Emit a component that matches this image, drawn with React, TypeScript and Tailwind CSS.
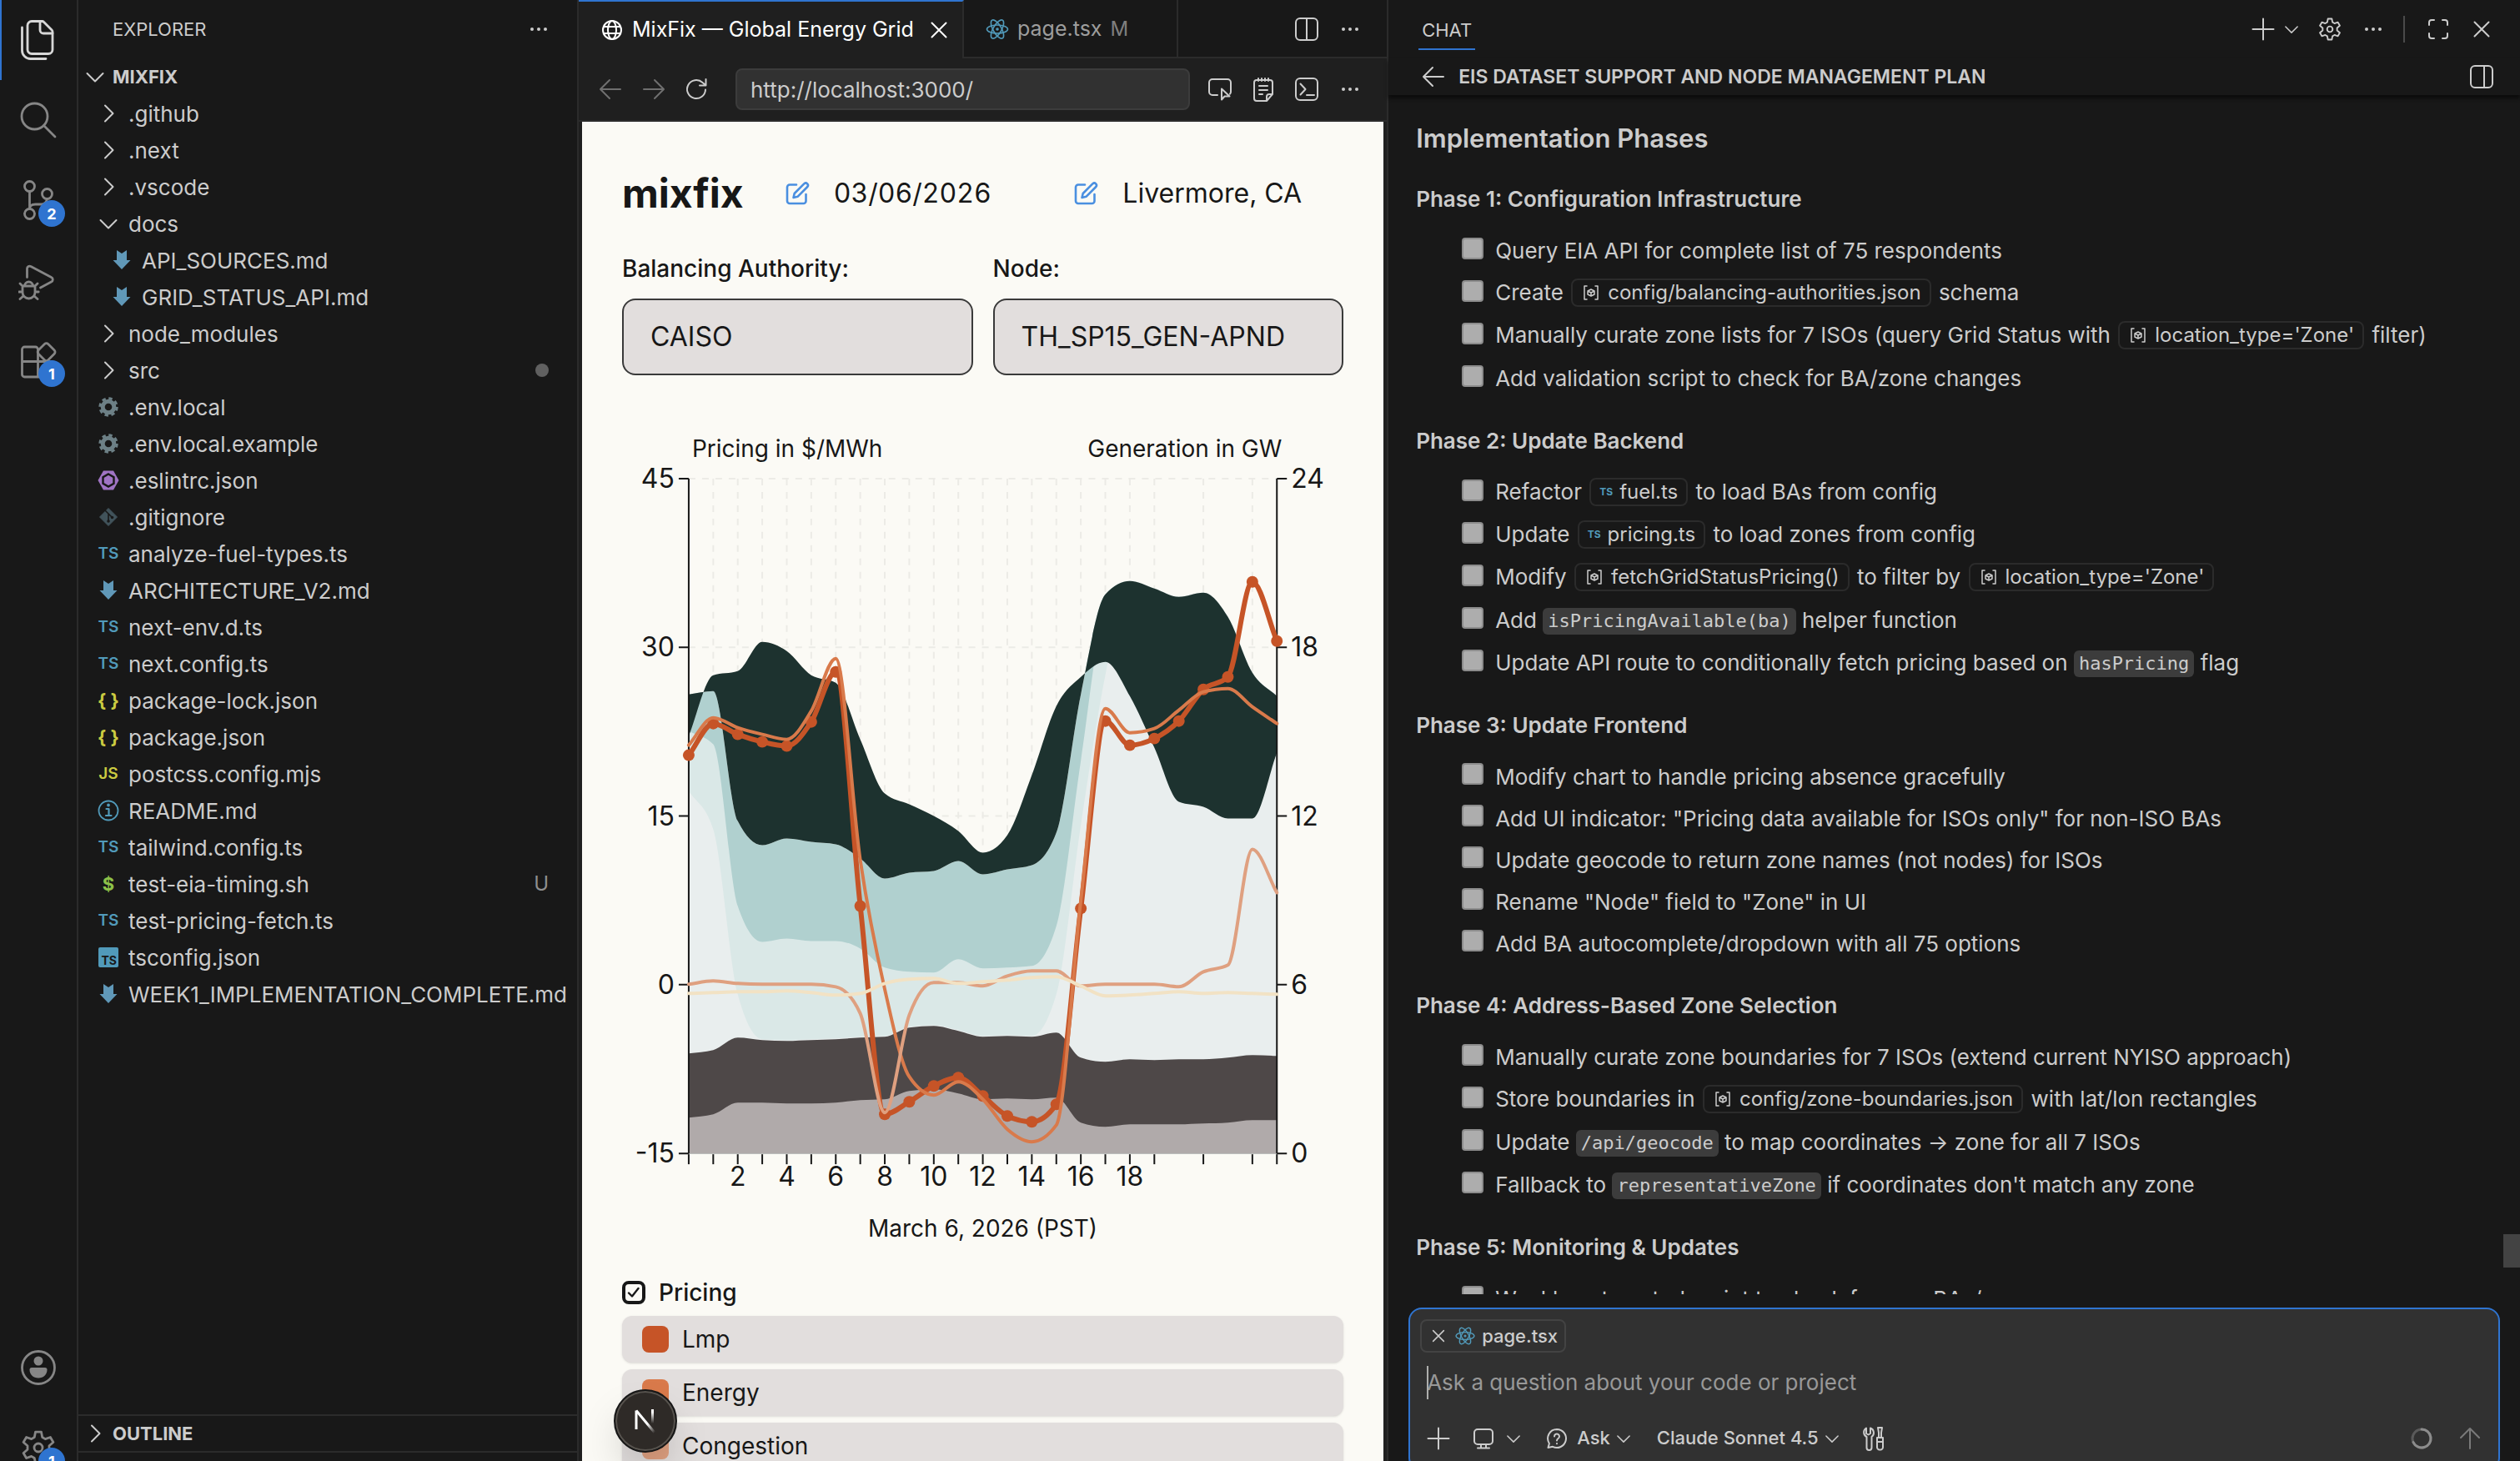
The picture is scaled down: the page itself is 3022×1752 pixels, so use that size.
import type { ReactNode } from "react";
import clsx from "clsx";

interface IconProps {
  className?: string;
  children: ReactNode;
  box?: number;
  stroke?: number;
}

function Icon({ className, children, box = 32, stroke = 2 }: IconProps) {
  return (
    <svg
      viewBox={`0 0 ${box} ${box}`}
      fill="none"
      stroke="currentColor"
      strokeWidth={stroke}
      strokeLinecap="round"
      strokeLinejoin="round"
      className={clsx("shrink-0", className ?? "size-8")}
      aria-hidden="true"
    >
      {children}
    </svg>
  );
}

const ChevronRight = () => (
  <Icon>
    <path d="M12 6.500l9.500 9.500-9.500 9.500" />
  </Icon>
);

const ChevronDown = ({ className }: { className?: string }) => (
  <Icon className={className}>
    <path d="M6.500 12l9.500 9.500 9.500-9.500" />
  </Icon>
);

const Dots = () => (
  <Icon>
    <g fill="currentColor" stroke="none">
      <circle cx="8" cy="16" r="2" />
      <circle cx="16" cy="16" r="2" />
      <circle cx="24" cy="16" r="2" />
    </g>
  </Icon>
);

const CloseIcon = ({ className }: { className?: string }) => (
  <Icon className={className}>
    <path d="M7.500 7.500l17 17M24.500 7.500l-17 17" />
  </Icon>
);

const PlusIcon = () => (
  <Icon>
    <path d="M16 3.500v25M3.500 16h25" />
  </Icon>
);

const SplitIcon = ({ at = 16 }: { at?: number }) => (
  <Icon>
    <rect x="3" y="3" width="26" height="26" rx="5" />
    <path d={`M${at} 3v26`} />
  </Icon>
);

const GEAR_PATH =
  "M20.500 3.200h7l1.200 6.300 3.600 2.100 6.100-2.100 3.500 6-4.900 4.200v4.600l4.900 4.200-3.500 6-6.100-2.100-3.600 2.100-1.200 6.300h-7l-1.200-6.300-3.600-2.100-6.100 2.100-3.500-6 4.900-4.200v-4.600l-4.900-4.200 3.500-6 6.100 2.100 3.600-2.100z";

const GearIcon = ({ className, stroke = 2.8 }: { className?: string; stroke?: number }) => (
  <Icon box={48} stroke={stroke} className={className}>
    <g transform="translate(0 2)">
      <path d={GEAR_PATH} />
      <circle cx="24" cy="22" r="5" />
    </g>
  </Icon>
);

const ReactIcon = ({ className }: { className?: string }) => (
  <Icon className={clsx("text-[#519aba]", className ?? "size-8")} stroke={1.6}>
    <ellipse cx="16" cy="16" rx="12.500" ry="5" />
    <ellipse cx="16" cy="16" rx="12.500" ry="5" transform="rotate(60 16 16)" />
    <ellipse cx="16" cy="16" rx="12.500" ry="5" transform="rotate(120 16 16)" />
    <circle cx="16" cy="16" r="1" />
  </Icon>
);

const EditIcon = () => (
  <Icon className="size-8 text-[#4a8fe0]" stroke={2.6}>
    <path d="M15 5.500H7a3 3 0 0 0-3 3V25a3 3 0 0 0 3 3h16.500a3 3 0 0 0 3-3v-8" />
    <path d="M24.500 4.200a2.700 2.700 0 0 1 3.800 3.800L16.500 19.800l-5 1.200 1.200-5z" />
  </Icon>
);

/* ---------- Activity bar ---------- */

const activityItems: { id: string; label: string; badge?: number; icon: ReactNode }[] = [
  {
    id: "files",
    label: "Explorer",
    icon: (
      <>
        <path d="M16 1.500h12.500a3 3 0 0 1 2.100.9l9.500 9.500a3 3 0 0 1 .9 2.100v21.500a5 5 0 0 1-5 5H16a5 5 0 0 1-5-5v-29a5 5 0 0 1 5-5z" />
        <path d="M26 1.500v10.500a4 4 0 0 0 4 4h11" />
        <path d="M4.500 9v27.500a10 10 0 0 0 10 10H33" />
      </>
    ),
  },
  {
    id: "search",
    label: "Search",
    icon: (
      <>
        <circle cx="19.500" cy="19.500" r="15.500" />
        <path d="M30.500 30.500L44 44" />
      </>
    ),
  },
  {
    id: "scm",
    label: "Source Control",
    badge: 2,
    icon: (
      <>
        <circle cx="13.500" cy="7.500" r="6" />
        <circle cx="34.500" cy="16.500" r="6" />
        <circle cx="13.500" cy="40.500" r="6" />
        <path d="M13.500 13.500v21M34.500 22.500c-1 4.500-3 6.500-7 6.500h-7c-4.500 0-7 1.500-7 5.500" />
      </>
    ),
  },
  {
    id: "debug",
    label: "Run and Debug",
    icon: (
      <>
        <path d="M10.500 20.500V10a3 3 0 0 1 4.500-2.500l24.500 13a3 3 0 0 1 0 5.500L26.500 33" />
        <path d="M5 31h15v7.500a7.500 7.500 0 0 1-15 0zM7.500 31a5 5 0 0 1 10 0M5 31l-3-3M20 31l3-3M5 38H.800M20 38h4.200M6 43l-4 3.500M19 43l4 3.500" />
      </>
    ),
  },
  {
    id: "extensions",
    label: "Extensions",
    badge: 1,
    icon: (
      <>
        <path d="M23.500 25.500H4.500V11a3 3 0 0 1 3-3h13a3 3 0 0 1 3 3zM4.500 25.500V41a3 3 0 0 0 3 3h32.500a3 3 0 0 0 3-3V28.500a3 3 0 0 0-3-3H23.500V44" />
        <path d="M31.500 4.500a3 3 0 0 1 4.200 0l7.500 7.500a3 3 0 0 1 0 4.200l-7.500 7.500a3 3 0 0 1-4.200 0L24 16.200a3 3 0 0 1 0-4.200z" />
      </>
    ),
  },
];

function Badge({ value }: { value: number }) {
  return (
    <span className="absolute top-12 left-[46px] flex size-8 items-center justify-center rounded-full bg-[#2f74d0] text-[18px] font-bold text-white">
      {value}
    </span>
  );
}

function ActivityBar() {
  return (
    <nav className="flex w-[94px] shrink-0 flex-col border-r-2 border-[#2b2b2b] bg-[#181818] text-[#868686]">
      {activityItems.map((item, i) => (
        <button
          key={item.id}
          aria-label={item.label}
          className={clsx(
            "relative flex h-24 w-full items-center justify-center",
            i === 0 && "border-l-2 border-[#2f74d0] pr-0.5 text-[#d7d7d7]",
          )}
        >
          <Icon box={48} stroke={2.8} className="size-12">
            {item.icon}
          </Icon>
          {item.badge && <Badge value={item.badge} />}
        </button>
      ))}
      <div className="mt-auto -mb-8">
        <button aria-label="Accounts" className="flex h-24 w-full items-center justify-center">
          <Icon box={48} stroke={2.8} className="size-12">
            <circle cx="24" cy="24" r="19.500" />
            <circle cx="24" cy="16" r="5.500" fill="currentColor" stroke="none" />
            <path
              d="M16 24h16a2.500 2.500 0 0 1 2.500 2.500c0 6-4.500 10-10.500 10s-10.500-4-10.500-10A2.500 2.500 0 0 1 16 24z"
              fill="currentColor"
              stroke="none"
            />
          </Icon>
        </button>
        <button aria-label="Manage" className="relative flex h-24 w-full items-center justify-center">
          <GearIcon className="size-12" />
          <Badge value={1} />
        </button>
      </div>
    </nav>
  );
}

/* ---------- Explorer ---------- */

type FileKind =
  | "folder"
  | "open"
  | "md"
  | "gear"
  | "eslint"
  | "git"
  | "ts"
  | "json"
  | "js"
  | "info"
  | "sh"
  | "tsconfig";

const tree: { name: string; kind: FileKind; child?: boolean; status?: string }[] = [
  { name: ".github", kind: "folder" },
  { name: ".next", kind: "folder" },
  { name: ".vscode", kind: "folder" },
  { name: "docs", kind: "open" },
  { name: "API_SOURCES.md", kind: "md", child: true },
  { name: "GRID_STATUS_API.md", kind: "md", child: true },
  { name: "node_modules", kind: "folder" },
  { name: "src", kind: "folder", status: "dot" },
  { name: ".env.local", kind: "gear" },
  { name: ".env.local.example", kind: "gear" },
  { name: ".eslintrc.json", kind: "eslint" },
  { name: ".gitignore", kind: "git" },
  { name: "analyze-fuel-types.ts", kind: "ts" },
  { name: "ARCHITECTURE_V2.md", kind: "md" },
  { name: "next-env.d.ts", kind: "ts" },
  { name: "next.config.ts", kind: "ts" },
  { name: "package-lock.json", kind: "json" },
  { name: "package.json", kind: "json" },
  { name: "postcss.config.mjs", kind: "js" },
  { name: "README.md", kind: "info" },
  { name: "tailwind.config.ts", kind: "ts" },
  { name: "test-eia-timing.sh", kind: "sh", status: "U" },
  { name: "test-pricing-fetch.ts", kind: "ts" },
  { name: "tsconfig.json", kind: "tsconfig" },
  { name: "WEEK1_IMPLEMENTATION_COMPLETE.md", kind: "md" },
];

function FileIcon({ kind }: { kind: FileKind }) {
  switch (kind) {
    case "folder":
      return <ChevronRight />;
    case "open":
      return <ChevronDown />;
    case "md":
      return (
        <svg viewBox="0 0 32 32" className="size-8 shrink-0 fill-[#6098b8]" aria-hidden="true">
          <path d="M10 4l6 4 6-4v12h4.500L16 27 5.500 16H10z" />
        </svg>
      );
    case "gear":
      return (
        <svg viewBox="0 0 32 32" className="size-8 shrink-0 text-[#6d8086]" aria-hidden="true">
          <circle cx="16" cy="16" r="6.800" fill="none" stroke="currentColor" strokeWidth="5" />
          <circle cx="16" cy="16" r="10.200" fill="none" stroke="currentColor" strokeWidth="3" strokeDasharray="4.400 3.610" />
        </svg>
      );
    case "eslint":
      return (
        <svg viewBox="0 0 32 32" className="size-8 shrink-0" aria-hidden="true">
          <path d="M10 4.500h12L28.500 16 22 27.500H10L3.500 16z" fill="#a074c4" />
          <path d="M16 8.500l6.500 3.800v7.400L16 23.500l-6.500-3.800v-7.400z" fill="#a074c4" stroke="#181818" strokeWidth="2.400" />
        </svg>
      );
    case "git":
      return (
        <svg viewBox="0 0 32 32" className="size-8 shrink-0" aria-hidden="true">
          <path d="M16 5.500L26.500 16 16 26.500 5.500 16z" fill="#41535b" stroke="#41535b" strokeLinejoin="round" />
          <path d="M12 8l4 4v10M16 12l5 5" fill="none" stroke="#181818" strokeWidth="1.600" />
          <circle cx="16" cy="21" r="1.800" fill="#181818" />
          <circle cx="20.500" cy="16.500" r="1.800" fill="#181818" />
        </svg>
      );
    case "ts":
      return <span className="w-8 shrink-0 text-center text-[19px] font-semibold text-[#519aba]">TS</span>;
    case "js":
      return <span className="w-8 shrink-0 text-center text-[19px] font-semibold text-[#cbcb41]">JS</span>;
    case "json":
      return <span className="w-8 shrink-0 text-center text-[22px] leading-8 font-bold text-[#cbcb41]">{"{ }"}</span>;
    case "sh":
      return <span className="w-8 shrink-0 text-center text-[22px] font-bold text-[#8dc149]">$</span>;
    case "info":
      return (
        <Icon className="size-8 text-[#519aba]" stroke={1.8}>
          <circle cx="16" cy="16" r="11.500" />
          <path d="M13.500 14h3v8M13 22h6.500" strokeWidth="2.200" />
          <circle cx="16" cy="9.500" r="1" fill="currentColor" />
        </Icon>
      );
    case "tsconfig":
      return (
        <span className="flex w-8 shrink-0 justify-center">
          <span className="flex size-6 items-end justify-end rounded-xs bg-[#519aba] pr-0.5 text-[14px] leading-4 font-bold text-[#181818]">
            TS
          </span>
        </span>
      );
  }
}

function Sidebar() {
  return (
    <aside className="flex w-[600px] shrink-0 flex-col border-r-2 border-[#2b2b2b] bg-[#181818] text-[#cccccc]">
      <header className="flex h-[70px] shrink-0 items-center justify-between pr-[30px] pl-[41px]">
        <h2 className="text-[22px]">EXPLORER</h2>
        <button aria-label="Views and more actions">
          <Dots />
        </button>
      </header>
      <button className="flex h-11 shrink-0 items-center gap-[5px] pl-1 text-[22px] font-bold">
        <ChevronDown />
        MIXFIX
      </button>
      <ul className="flex-1 overflow-hidden text-[26px]">
        {tree.map((f) => (
          <li key={f.name}>
            <button
              className={clsx(
                "flex h-11 w-full items-center gap-2 pr-[34px] whitespace-nowrap",
                f.child ? "pl-9" : "pl-5",
              )}
            >
              <FileIcon kind={f.kind} />
              {f.name}
              {f.status === "dot" && <span className="ml-auto size-4 rounded-full bg-[#606060]" />}
              {f.status === "U" && <span className="ml-auto text-[24px] text-[#8f8f8f]">U</span>}
            </button>
          </li>
        ))}
      </ul>
      <button className="flex h-11 shrink-0 items-center gap-[5px] border-t-2 border-[#2b2b2b] pl-1 text-[22px] font-bold">
        <ChevronRight />
        OUTLINE
      </button>
      <div className="h-3 shrink-0 border-t-2 border-[#2b2b2b]" />
    </aside>
  );
}

/* ---------- Chart ---------- */

const PLOT = { left: 80, right: 786, top: 74, bottom: 884 };
const HOURS = 24;

// Hourly samples, in chart units measured from the top of the drawing.
const series = {
  gas: [383, 310, 305, 270, 281, 310, 319, 387, 452, 465, 479, 497, 523, 502, 430, 347, 312, 294, 335, 397, 462, 468, 482, 482, 403],
  imports: [333, 329, 485, 514, 506, 510, 513, 530, 554, 547, 545, 533, 549, 543, 538, 499, 333, 213, 197, 206, 216, 211, 240, 307, 335],
  hydro: [377, 393, 587, 630, 626, 629, 629, 638, 661, 666, 667, 651, 662, 661, 659, 611, 413, 228, 197, 206, 216, 211, 240, 307, 335],
  solar: [449, 495, 693, 747, 748, 747, 746, 744, 743, 732, 730, 736, 743, 742, 743, 693, 490, 310, 197, 206, 216, 211, 240, 307, 335],
  nuclear: [764, 760, 745, 748, 749, 748, 747, 745, 744, 733, 731, 737, 744, 743, 744, 739, 769, 774, 771, 772, 771, 771, 769, 766, 767],
  wind: [841, 837, 823, 823, 824, 824, 823, 820, 819, 809, 807, 812, 819, 818, 819, 817, 847, 852, 849, 849, 849, 848, 847, 844, 844],
};

const lmp = [406, 368, 381, 390, 395, 366, 306, 587, 837, 822, 803, 793, 815, 839, 846, 825, 590, 365, 394, 386, 365, 327, 312, 198, 269];
const energy = [394, 361, 373, 381, 387, 353, 290, 532, 687, 792, 814, 798, 819, 855, 870, 850, 580, 350, 379, 374, 352, 330, 326, 348, 368];
const congestion = [681, 677, 680, 681, 681, 681, 684, 716, 835, 718, 679, 679, 683, 671, 665, 665, 683, 681, 681, 681, 684, 666, 658, 519, 571];
const loss = [692, 691, 690, 690, 689, 691, 694, 692, 680, 675, 674, 680, 678, 676, 673, 672, 683, 695, 694, 692, 690, 692, 691, 692, 693];

const xAt = (hour: number) => PLOT.left + ((PLOT.right - PLOT.left) * hour) / HOURS;

// Monotone cubic segments through the samples, so peaks never overshoot.
function segments(ys: number[], reverse = false) {
  const n = ys.length;
  const d = ys.slice(1).map((y, i) => y - ys[i]);
  const m = ys.map((_, i) => {
    if (i === 0) return d[0];
    if (i === n - 1) return d[n - 2];
    const a = d[i - 1];
    const b = d[i];
    if (a * b <= 0) return 0;
    return Math.sign(a) * Math.min(Math.abs(a), Math.abs(b), Math.abs(a + b) / 4) * 2;
  });
  const out: string[] = [];
  for (let i = 0; i < n - 1; i++) {
    const x0 = xAt(i);
    const x1 = xAt(i + 1);
    const t = (x1 - x0) / 3;
    const c0 = `${x0 + t} ${ys[i] + m[i] / 3}`;
    const c1 = `${x1 - t} ${ys[i + 1] - m[i + 1] / 3}`;
    out.push(reverse ? `C${c1} ${c0} ${x0} ${ys[i]}` : `C${c0} ${c1} ${x1} ${ys[i + 1]}`);
  }
  return (reverse ? out.reverse() : out).join("");
}

const linePath = (ys: number[]) => `M${xAt(0)} ${ys[0]}${segments(ys)}`;

const areaPath = (top: number[], base?: number[]) => {
  if (!base) return `${linePath(top)}L${PLOT.right} ${PLOT.bottom}L${PLOT.left} ${PLOT.bottom}Z`;
  return `${linePath(top)}L${PLOT.right} ${base[base.length - 1]}${segments(base, true)}Z`;
};

const hourTicks = [...Array.from({ length: 20 }, (_, i) => i), 21, 23, 24];
const yTicks = [
  { price: "45", gw: "24" },
  { price: "30", gw: "18" },
  { price: "15", gw: "12" },
  { price: "0", gw: "6" },
  { price: "-15", gw: "0" },
];

function EnergyChart() {
  const yAt = (i: number) => PLOT.top + ((PLOT.bottom - PLOT.top) * i) / 4;
  return (
    <svg viewBox="0 0 866 1000" className="block w-full text-[#171717]" role="img" aria-label="Pricing and generation by hour">
      <g fill="currentColor" fontSize="28">
        <text x="84" y="48">Pricing in $/MWh</text>
        <text x="792" y="48" textAnchor="end">Generation in GW</text>
        <text x="433" y="984" textAnchor="middle">March 6, 2026 (PST)</text>
      </g>

      <g stroke="#ecebe6" strokeWidth="2" strokeDasharray="8 8">
        {yTicks.slice(0, 4).map((t, i) => (
          <path key={t.price} d={`M${PLOT.left} ${yAt(i)}H${PLOT.right}`} />
        ))}
        {hourTicks.slice(1, -1).map((h) => (
          <path key={h} d={`M${xAt(h)} ${PLOT.top}V${PLOT.bottom}`} />
        ))}
      </g>

      <path d={areaPath(series.imports)} fill="#b0d0cf" />
      <path d={areaPath(series.hydro)} fill="#dae8e7" />
      <path d={areaPath(series.solar)} fill="#e9eeee" />
      <path d={areaPath(series.gas, series.imports)} fill="#1d322f" />
      <path d={areaPath(series.nuclear)} fill="#4e4848" />
      <path d={areaPath(series.wind)} fill="#b0aaaa" />

      <g stroke="currentColor" strokeWidth="2">
        <path d={`M${PLOT.left} ${PLOT.top}V${PLOT.bottom}M${PLOT.right} ${PLOT.top}V${PLOT.bottom}`} />
        {yTicks.map((t, i) => (
          <path key={t.gw} d={`M${PLOT.left - 12} ${yAt(i)}h12M${PLOT.right} ${yAt(i)}h12`} />
        ))}
        {hourTicks.map((h) => (
          <path key={h} d={`M${xAt(h)} ${PLOT.bottom + 1}v12`} />
        ))}
      </g>

      <g fill="none" strokeLinecap="round">
        <path d={linePath(lmp)} stroke="#c65427" strokeWidth="6" />
        {lmp.map((y, h) => (
          <circle key={h} cx={xAt(h)} cy={y} r="7" fill="#c65427" />
        ))}
        <path d={linePath(energy)} stroke="#d97a4b" strokeWidth="4" />
        <path d={linePath(congestion)} stroke="#dfa080" strokeWidth="4" />
        <path d={linePath(loss)} stroke="#f2e2c4" strokeWidth="4" />
      </g>

      <g fill="currentColor" fontSize="32">
        {yTicks.map((t, i) => (
          <g key={t.gw}>
            <text x="63" y={yAt(i) + 11} textAnchor="end">
              {t.price}
            </text>
            <text x="803" y={yAt(i) + 11}>
              {t.gw}
            </text>
          </g>
        ))}
        {[2, 4, 6, 8, 10, 12, 14, 16, 18].map((h) => (
          <text key={h} x={xAt(h)} y="923" textAnchor="middle">
            {h}
          </text>
        ))}
      </g>
    </svg>
  );
}

/* ---------- Editor ---------- */

function PickField({ id, label, value }: { id: string; label: string; value: string }) {
  return (
    <div className="flex-1">
      <label htmlFor={id} className="block text-[28px] leading-9 font-medium">
        {label}
      </label>
      <select
        id={id}
        defaultValue={value}
        className="mt-[18px] block h-23 w-full appearance-none rounded-2xl border-2 border-[#3a3a3a] bg-[#e2dedd] px-8 text-[32px]"
      >
        <option>{value}</option>
      </select>
    </div>
  );
}

const pricingRows = [
  { label: "Lmp", swatch: "bg-[#c65427]" },
  { label: "Energy", swatch: "bg-[#d97a4b]" },
  { label: "Congestion", swatch: "bg-[#dfa080]" },
];

function Preview() {
  return (
    <div className="relative mx-1 min-h-0 flex-1 overflow-hidden bg-[#fbfaf5] px-12 text-[#171717]">
      <div className="flex h-[172px] items-center">
        <h1 className="text-[48px] font-bold">mixfix</h1>
        <button className="ml-12 flex items-center gap-7 text-[32px] tabular-nums">
          <EditIcon />
          03/06/2026
        </button>
        <button className="ml-auto flex items-center gap-7 pr-[50px] text-[32px]">
          <EditIcon />
          Livermore, CA
        </button>
      </div>
      <div className="-mt-3.5 flex gap-6">
        <PickField id="ba" label="Balancing Authority:" value="CAISO" />
        <PickField id="node" label="Node:" value="TH_SP15_GEN-APND" />
      </div>
      <div className="pt-[50px]">
        <EnergyChart />
      </div>
      <label className="mt-[33px] flex h-9 items-center gap-4 text-[28px] font-medium">
        <span className="grid size-7 place-items-center">
          <input
            type="checkbox"
            defaultChecked
            className="col-start-1 row-start-1 size-7 appearance-none rounded-lg border-4 border-[#171717]"
          />
          <Icon className="col-start-1 row-start-1 size-4" box={16} stroke={2.4}>
            <path d="M2 8.500l4 4L13.500 3" />
          </Icon>
        </span>
        Pricing
      </label>
      <ul className="mt-2.5 space-y-2">
        {pricingRows.map((r) => (
          <li key={r.label} className="flex h-14 items-center gap-4 rounded-xl bg-[#e2dedd] px-6 text-[28px] shadow-sm">
            <span className={clsx("size-8 rounded-lg", r.swatch)} />
            {r.label}
          </li>
        ))}
      </ul>
      <button
        aria-label="Open Next.js Dev Tools"
        className="absolute bottom-2.5 left-[38px] flex size-[76px] items-center justify-center rounded-full border-2 border-[#171717] bg-[#2e2a27] shadow-2xl ring-2 ring-[#57534e] ring-inset"
      >
        <svg viewBox="0 0 28 30" className="h-[30px] w-7" fill="none" strokeWidth="3" aria-hidden="true">
          <defs>
            <linearGradient id="nDiag" x1="0" y1="0" x2="1" y2="1">
              <stop offset="0.6" stopColor="#fff" />
              <stop offset="1" stopColor="#fff" stopOpacity="0" />
            </linearGradient>
            <linearGradient id="nStem" x1="0" y1="0" x2="0" y2="1">
              <stop offset="0.2" stopColor="#fff" />
              <stop offset="1" stopColor="#fff" stopOpacity="0" />
            </linearGradient>
          </defs>
          <path d="M3 25V2.500" stroke="#fff" />
          <path d="M3 2.500L25 29" stroke="url(#nDiag)" />
          <rect x="21" y="1" width="3" height="17" fill="url(#nStem)" />
        </svg>
      </button>
    </div>
  );
}

function Editor() {
  return (
    <main className="flex min-w-0 flex-[970] flex-col bg-[#1f1f1f] text-[#cccccc]">
      <div className="flex h-[70px] shrink-0 text-[25px] whitespace-nowrap">
        <div className="flex w-[462px] items-center border-t-2 border-r-2 border-t-[#2f74d0] border-r-[#2b2b2b] pl-6 text-white">
          <Icon stroke={2}>
            <circle cx="16" cy="16" r="11" />
            <ellipse cx="16" cy="16" rx="5" ry="11" />
            <path d="M6 12h20M6 20h20" />
          </Icon>
          <span className="ml-2">MixFix — Global Energy Grid</span>
          <button aria-label="Close tab" className="ml-3.5">
            <CloseIcon />
          </button>
        </div>
        <div className="flex flex-1 border-b-2 border-[#2b2b2b] bg-[#181818]">
          <div className="flex w-[257px] items-center border-r-2 border-[#2b2b2b] pt-0.5 pl-6 text-[#9d9d9d]">
            <ReactIcon />
            <span className="ml-2">page.tsx</span>
            <span className="ml-2.5 text-[24px] text-[#7f7f7f]">M</span>
          </div>
          <div className="ml-auto flex items-center gap-5 pt-0.5 pr-7">
            <button aria-label="Split editor">
              <SplitIcon />
            </button>
            <button aria-label="More actions">
              <Dots />
            </button>
          </div>
        </div>
      </div>

      <div className="flex h-[76px] shrink-0 items-center gap-5 border-b-2 border-[#2b2b2b] pr-7 pl-[22px]">
        <button aria-label="Back" className="text-[#6f6f6f]">
          <Icon>
            <path d="M28 16H4.500M15 5L4 16l11 11" />
          </Icon>
        </button>
        <button aria-label="Forward" className="text-[#6f6f6f]">
          <Icon>
            <path d="M4 16h23.500M17 5l11 11-11 11" />
          </Icon>
        </button>
        <button aria-label="Reload">
          <Icon>
            <path d="M26 16.500A11 11 0 1 1 22.500 8L26 11M26.500 4v7.500H19" />
          </Icon>
        </button>
        <input
          aria-label="Address"
          defaultValue="http://localhost:3000/"
          className="ml-2.5 h-[50px] min-w-0 flex-1 rounded-lg border-2 border-[#3c3c3c] bg-[#313131] px-4 text-[26px]"
        />
        <button aria-label="Select element">
          <Icon>
            <path d="M13 23H7a4 4 0 0 1-4-4V8a4 4 0 0 1 4-4h18a4 4 0 0 1 4 4v11a4 4 0 0 1-1 2.700M18 15.500v13l3.500-4h6z" />
          </Icon>
        </button>
        <button aria-label="Console logs">
          <Icon>
            <path d="M5 8a3 3 0 0 1 3-3h16a3 3 0 0 1 3 3v14l-7 8H8a3 3 0 0 1-3-3zM27 22h-4a3 3 0 0 0-3 3v4.500M10 3v3M14 3v3M18 3v3M22 3v3M11 12h10M11 17h10M11 22h4" />
          </Icon>
        </button>
        <button aria-label="Toggle developer tools">
          <Icon>
            <rect x="3" y="3" width="26" height="26" rx="5" />
            <path d="M8.500 9.500L14.500 16l-6 6.500M16 23h9" />
          </Icon>
        </button>
        <button aria-label="More actions">
          <Dots />
        </button>
      </div>

      <Preview />
    </main>
  );
}

/* ---------- Chat ---------- */

function Symbol({ children }: { children: ReactNode }) {
  return (
    <a href="#symbol" className="mx-0.5 mb-1 inline-flex h-[34px] items-center gap-2 rounded-lg border-2 border-[#2b2b2b] px-2.5 align-middle text-[24px]">
      <Icon className="size-6" box={24} stroke={1.5}>
        <path d="M7 4H4v16h3M17 4h3v16h-3M12 8l4 2v4l-4 2-4-2v-4zM8 10l4 2 4-2M12 12v4" />
      </Icon>
      {children}
    </a>
  );
}

function TsFile({ children }: { children: ReactNode }) {
  return (
    <a href="#file" className="mx-0.5 mb-1 inline-flex h-[34px] items-center gap-2 rounded-lg border-2 border-[#2b2b2b] px-2.5 align-middle text-[24px]">
      <span className="text-[12px] font-bold text-[#519aba]">TS</span>
      {children}
    </a>
  );
}

function Code({ children }: { children: ReactNode }) {
  return (
    <code className="mb-0.5 inline-flex h-8 items-center rounded-md bg-[#3c3c3c] px-1.5 align-middle font-['DejaVu_Sans_Mono',monospace] text-[22px]">
      {children}
    </code>
  );
}

const phases: { title: string; plain?: boolean; items: ReactNode[] }[] = [
  {
    title: "Phase 1: Configuration Infrastructure",
    items: [
      "Query EIA API for complete list of 75 respondents",
      <>Create <Symbol>config/balancing-authorities.json</Symbol> schema</>,
      <>Manually curate zone lists for 7 ISOs (query Grid Status with <Symbol>location_type='Zone'</Symbol> filter)</>,
      "Add validation script to check for BA/zone changes",
    ],
  },
  {
    title: "Phase 2: Update Backend",
    items: [
      <>Refactor <TsFile>fuel.ts</TsFile> to load BAs from config</>,
      <>Update <TsFile>pricing.ts</TsFile> to load zones from config</>,
      <>Modify <Symbol>fetchGridStatusPricing()</Symbol> to filter by <Symbol>location_type='Zone'</Symbol></>,
      <>Add <Code>isPricingAvailable(ba)</Code> helper function</>,
      <>Update API route to conditionally fetch pricing based on <Code>hasPricing</Code> flag</>,
    ],
  },
  {
    title: "Phase 3: Update Frontend",
    plain: true,
    items: [
      "Modify chart to handle pricing absence gracefully",
      'Add UI indicator: "Pricing data available for ISOs only" for non-ISO BAs',
      "Update geocode to return zone names (not nodes) for ISOs",
      'Rename "Node" field to "Zone" in UI',
      "Add BA autocomplete/dropdown with all 75 options",
    ],
  },
  {
    title: "Phase 4: Address-Based Zone Selection",
    items: [
      "Manually curate zone boundaries for 7 ISOs (extend current NYISO approach)",
      <>Store boundaries in <Symbol>config/zone-boundaries.json</Symbol> with lat/lon rectangles</>,
      <>Update <Code>/api/geocode</Code> to map coordinates → zone for all 7 ISOs</>,
      <>Fallback to <Code>representativeZone</Code> if coordinates don't match any zone</>,
    ],
  },
  {
    title: "Phase 5: Monitoring & Updates",
    items: ["Weekly automated script to check for new BAs/zones"],
  },
];

function ChatPanel() {
  return (
    <section className="flex min-w-0 flex-[1358] flex-col border-l-2 border-[#2b2b2b] bg-[#181818] text-[#cccccc]">
      <header className="flex h-[70px] shrink-0 items-center pr-[30px] pl-9">
        <h2 className="mt-2.5 border-b-2 border-[#2f74d0] px-1 pb-1.5 text-[22px] leading-8">CHAT</h2>
        <div className="ml-auto flex items-center gap-5">
          <button aria-label="New chat" className="-mr-0.5 flex items-center">
            <PlusIcon />
            <ChevronDown className="ml-1.5 size-6" />
          </button>
          <button aria-label="Configure chat">
            <GearIcon className="size-8" />
          </button>
          <button aria-label="More actions">
            <Dots />
          </button>
          <span className="mr-1 h-8 w-0.5 bg-[#4a4a4a]" />
          <button aria-label="Maximize">
            <Icon>
              <path d="M11 5H8a3 3 0 0 0-3 3v3M21 5h3a3 3 0 0 1 3 3v3M11 27H8a3 3 0 0 1-3-3v-3M21 27h3a3 3 0 0 0 3-3v-3" />
            </Icon>
          </button>
          <button aria-label="Close chat">
            <CloseIcon />
          </button>
        </div>
      </header>
      <div className="z-10 flex h-11 shrink-0 items-center justify-between pr-[30px] pl-[38px] shadow-[0_4px_4px_#0c0c0c]">
        <button className="flex items-center gap-3.5 text-[23px] font-semibold">
          <Icon>
            <path d="M28 16H4.500M15 5L4 16l11 11" />
          </Icon>
          EIS DATASET SUPPORT AND NODE MANAGEMENT PLAN
        </button>
        <button aria-label="Toggle sessions">
          <SplitIcon at={19} />
        </button>
      </div>

      <div className="relative min-h-0 flex-1 overflow-hidden pt-8 pl-[33px] text-[26px] whitespace-nowrap">
        <h3 className="mb-2 text-[31px] leading-10 font-semibold">Implementation Phases</h3>
        {phases.map((p) => (
          <div key={p.title} className="mb-[5px]">
            <h4 className="flex h-[73px] items-end pb-2 text-[26px] leading-10 font-semibold">{p.title}</h4>
            <ul className="pt-2 pl-[55px]">
              {p.items.map((item, i) => (
                <li key={i} className={p.plain ? "h-[50px]" : "h-[51px]"}>
                  <label className="flex h-full items-center gap-3.5">
                    <input
                      type="checkbox"
                      disabled
                      className="mb-1.5 size-[26px] shrink-0 appearance-none rounded-sm border-2 border-[#8c8c8c] bg-[#adadad]"
                    />
                    <span>{item}</span>
                  </label>
                </li>
              ))}
            </ul>
          </div>
        ))}
        <div className="absolute right-0 bottom-8 h-10 w-5 bg-[#434343]" />
      </div>

      <form className="mx-6 mt-4 -mb-3 flex h-[196px] shrink-0 flex-col rounded-2xl border-2 border-[#2f74d0] bg-[#313131] px-3 pt-3">
        <button type="button" className="flex h-10 w-fit items-center gap-1.5 rounded-lg border-2 border-[#434343] px-2 text-[22px] font-medium">
          <CloseIcon className="size-6" />
          <ReactIcon className="size-7" />
          page.tsx
        </button>
        <div className="relative mt-4">
          <span className="absolute top-0 left-2 h-10 w-0.5 bg-[#aeafad]" />
          <textarea
            aria-label="Chat input"
            rows={1}
            placeholder="Ask a question about your code or project"
            className="block h-10 w-full resize-none bg-transparent px-2 text-[26px] leading-10 placeholder:text-[#989898]"
          />
        </div>
        <div className="mt-[30px] flex items-center px-1.5 text-[22px] font-medium">
          <button type="button" aria-label="Add context">
            <PlusIcon />
          </button>
          <button type="button" aria-label="Set session target" className="ml-6 flex items-center gap-2.5">
            <Icon className="size-7" box={28}>
              <rect x="3" y="3" width="22" height="18" rx="4" />
              <path d="M11 21v4M17 21v4M7 25.500h14" />
            </Icon>
            <ChevronDown className="size-6" />
          </button>
          <button type="button" className="ml-[26px] flex items-center">
            <Icon className="mr-2.5 size-7" box={28}>
              <path d="M14 3a11 11 0 1 1-5 20.800L3.500 25l1.400-5A11 11 0 0 1 14 3z" />
              <path d="M11 11.500a3 3 0 1 1 4.600 2.500c-1 .7-1.600 1.300-1.600 2.500M14 20v.2" />
            </Icon>
            Ask
            <ChevronDown className="ml-1 size-6" />
          </button>
          <button type="button" className="ml-7 flex items-center">
            Claude Sonnet 4.5
            <ChevronDown className="ml-1 size-6" />
          </button>
          <button type="button" aria-label="Configure tools" className="ml-[22px]">
            <Icon>
              <path d="M7 3.500v6.500l2.500 1.500L12 10V3.500a6 6 0 0 1 1.500 10.500v13a3 3 0 0 1-6 0v-13A6 6 0 0 1 7 3.500zM21 3h5l-1 6v6h-3V9zM20 15h7v11.500a3 3 0 0 1-3 3h-1a3 3 0 0 1-3-3zM20 20h7" />
            </Icon>
          </button>
          <Icon className="ml-auto size-8" stroke={3}>
            <circle cx="16" cy="16" r="11" className="stroke-[#5a5a5a]" />
            <path d="M16 5a11 11 0 1 1-10 15.500" className="stroke-[#8c8c8c]" />
          </Icon>
          <button type="button" aria-label="Send" className="ml-[26px] text-[#7a7a7a]">
            <Icon>
              <path d="M16 28V4.500M5 15L16 4l11 11" />
            </Icon>
          </button>
        </div>
      </form>
    </section>
  );
}

export default function App() {
  return (
    <div className="flex h-screen overflow-hidden bg-[#181818] font-['Inter','Liberation_Sans',sans-serif]">
      <ActivityBar />
      <Sidebar />
      <Editor />
      <ChatPanel />
    </div>
  );
}
